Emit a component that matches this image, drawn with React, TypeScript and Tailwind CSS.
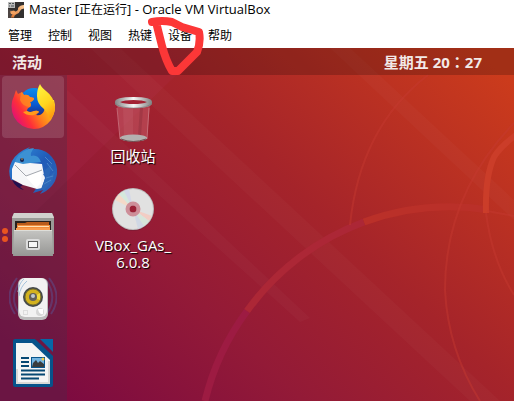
import type { ReactNode } from "react";

const menus = ["管理", "控制", "视图", "热键", "设备", "帮助"];

function VmIcon() {
  return (
    <svg viewBox="0 0 16 16" className="size-4 shrink-0" aria-hidden="true">
      <defs>
        <linearGradient id="vm" x1="0" y1="1" x2="1" y2="0">
          <stop offset="0" stopColor="#d9702c" />
          <stop offset="1" stopColor="#ffcf9a" />
        </linearGradient>
      </defs>
      <rect width="16" height="16" fill="#33302f" />
      <path d="M0 7 5 8.500 4 16H0z" fill="#4d4542" />
      <path d="M3 15.500Q4 11 7.500 9.500Q10.500 8.500 10 6Q12 3 16 3V6.500Q13 6.500 12 9Q11 12 8 12.500Q6 13.500 6 15.500z" fill="url(#vm)" />
      <path d="M2 9.500 6 8.500 9 11 6.500 12.500 3 12z" fill="#f2a262" />
      <path d="M0 0H7V6H0z" fill="#b9b9b9" />
      <path d="M1 1.500H3M4 1.500H6M1 4H2M3 4H6" stroke="#4c5558" />
    </svg>
  );
}

function Firefox() {
  return (
    <svg viewBox="0 0 48 48" className="size-12" aria-hidden="true">
      <defs>
        <linearGradient id="fx" x1=".95" y1=".2" x2=".05" y2=".7">
          <stop offset="0" stopColor="#ffe52b" />
          <stop offset=".25" stopColor="#ffb018" />
          <stop offset=".5" stopColor="#ff7a1d" />
          <stop offset=".75" stopColor="#ff3038" />
          <stop offset="1" stopColor="#e31172" />
        </linearGradient>
        <linearGradient id="fy" x1=".3" y1="0" x2=".7" y2="1">
          <stop offset="0" stopColor="#fff23c" />
          <stop offset=".55" stopColor="#ffd51f" />
          <stop offset="1" stopColor="#ff980e" />
        </linearGradient>
        <linearGradient id="fb" x1=".5" y1="0" x2=".5" y2="1">
          <stop offset="0" stopColor="#0a8cec" />
          <stop offset=".55" stopColor="#0b5bd2" />
          <stop offset="1" stopColor="#23206f" />
        </linearGradient>
      </defs>
      <circle cx="25" cy="20" r="15" fill="url(#fb)" />
      <path d="M7 7 9 11 13 9 15 12Q19 11 21 14L25 15Q25 18 21 19Q23 22 21 24Q18 25 18 28Q21 30 25 28Q29 27 30 29L27 32Q33 33 35 28Q37 23 35 17L45 17Q48 27 42 37Q35 46 25 46Q11 45 5 34Q0 23 5 13Z" fill="url(#fx)" />
      <path d="M31 1Q32 4 37 8Q45 14 46 24Q46 32 41 36Q39 30 35 26Q28 21 28 13Q28 6 31 1z" fill="url(#fy)" />
      <path d="M12 10 13 9 15 12Q19 11 21 14L25 15Q25 18 21 19Q23 22 21 24Q14 24 11 17z" fill="#ff8420" opacity=".8" />
      <path d="M18 28Q21 30 25 28Q29 27 30 29L25 32Q18 33 14 29z" fill="#ff9a1c" />
    </svg>
  );
}

function Thunderbird() {
  return (
    <svg viewBox="0 0 48 48" className="size-12" aria-hidden="true">
      <defs>
        <linearGradient id="tb" x1="0" y1="0" x2="1" y2="1">
          <stop offset="0" stopColor="#3193de" />
          <stop offset=".5" stopColor="#205bb8" />
          <stop offset="1" stopColor="#2f63b5" />
        </linearGradient>
      </defs>
      <path d="M2 33Q-2 23 3 14Q8 5 21 0L18 3Q31 0 40 7Q49 15 48 27Q46 41 31 47L34 43 24 46 30 37z" fill="url(#tb)" />
      <path d="M3 33 14 38 11 40 15 43Q7 41 3 33z" fill="#20104f" />
      <path d="M7 12Q13 2 25 1Q21 6 22 9Q29 7 32 15L22 16 13 18 6 15z" fill="#3c91d3" />
      <path d="M6 15 14 17 21 16 33 17 35 28 36 31 33 41 28 42 14 38 3 32V22z" fill="#f5f6f8" />
      <path d="m6 18 11 11 16-6-1 13-5 5" fill="#fff" />
      <path d="m6 18 11 11 16-6" fill="none" stroke="#a3a7ae" />
      <path d="M34 18 36 25 34 28 37 29 32 42 35 43 43 35 46 24 40 30 43 17 36 23z" fill="#2c68b8" />
      <path d="M36 10 43 17M38 16 44 24M37 31 44 29M35 37 42 33" stroke="#4984c9" strokeWidth="1" />
      <circle cx="13" cy="13" r="2" fill="#182654" />
      <circle cx="13" cy="12" r="1" fill="#80745c" />
    </svg>
  );
}

function Files() {
  return (
    <svg viewBox="0 0 48 48" className="size-12" aria-hidden="true">
      <defs>
        <linearGradient id="dr" x1="0" y1="0" x2="0" y2="1">
          <stop offset="0" stopColor="#c5c5c2" />
          <stop offset="1" stopColor="#969694" />
        </linearGradient>
      </defs>
      <path d="M5 2H43L45 6V43H3V6z" fill="#9a9a97" />
      <path d="M5 2H43L45 7H3z" fill="#d1d1ce" />
      <path d="M6 10H42V20H6z" fill="#28211e" />
      <path d="M8 12H16L18 11H40V19H8z" fill="#b95b1b" />
      <path d="M8 14H41V20H8z" fill="#f18d3c" />
      <path d="M9 15.500H40" stroke="#ffe0b3" />
      <path d="M7 18H41" stroke="#fa9d50" strokeWidth="2" />
      <path d="M5 19H43L44 45H4z" fill="url(#dr)" />
      <path d="M5 19.500H43" stroke="#deded9" />
      <rect x="17" y="28" width="14" height="11" rx="2" fill="#ddd" />
      <rect x="19.500" y="30.500" width="9" height="6" fill="#f7f7f7" stroke="#5e5e5e" />
    </svg>
  );
}

function Speaker() {
  return (
    <svg viewBox="0 0 48 48" className="size-12" aria-hidden="true">
      <g fill="none" stroke="#59599b" strokeWidth="2" opacity=".45">
        <path d="M8 3Q-6 21 6 39M12 5Q-1 22 10 38M40 3Q54 21 42 39M37 5Q49 22 38 38" />
      </g>
      <rect x="9" y="3" width="30" height="42" rx="6" fill="#bdbdbd" />
      <rect x="10" y="3" width="28" height="39" rx="6" fill="#f2f2f2" />
      <path d="M9 17Q10 8 15 4M10 21Q11 12 18 6" fill="none" stroke="#a6c4dc" />
      <circle cx="24" cy="22" r="10" fill="#44494a" />
      <circle cx="24" cy="22" r="8" fill="#d3b21e" stroke="#77702c" />
      <path d="m24 22 7-4v7z" fill="#f0d93a" />
      <circle cx="24" cy="22" r="4" fill="#62605a" />
      <circle cx="24" cy="21" r="2" fill="#c0c9d0" />
      <circle cx="31" cy="37" r="4" fill="#d7d7d7" />
      <path d="M29 34h5v5q-4 1-5-5" fill="#fff" />
      <rect x="14.500" y="35.500" width="4" height="4" fill="none" stroke="#ddd" />
    </svg>
  );
}

function Writer() {
  return (
    <svg viewBox="0 0 48 48" className="size-12" aria-hidden="true">
      <path d="M6 0H26L44 17V46Q44 48 42 48H6Q4 48 4 46V2Q4 0 6 0z" fill="#07538b" />
      <path d="M7 4H23L41 21V45H7z" fill="#f5f5f5" />
      <path d="M8 30V44H40V22" fill="none" stroke="#d9d9d7" strokeWidth="2" />
      <path d="M31 0H44V13z" fill="#0668a6" />
      <path d="M12 19H20M12 23H20M12 27H20M12 31.500H36M12 35.500H36M12 39.500H30" stroke="#064873" strokeWidth="2" />
      <rect x="22" y="18" width="14" height="11" fill="#0a568b" />
      <path d="M23 19H35V28H23z" fill="#74b4df" />
      <path d="m23 28 1-4 3-3 2 3 2-2 4 3v3z" fill="#3a3d3d" />
      <circle cx="34" cy="20" r="1.500" fill="#f5cb45" />
    </svg>
  );
}

function Trash() {
  return (
    <svg viewBox="0 0 48 48" className="size-12" aria-hidden="true">
      <defs>
        <linearGradient id="rim" x1="0" x2="1">
          <stop offset="0" stopColor="#858585" />
          <stop offset=".5" stopColor="#f5f5f5" />
          <stop offset="1" stopColor="#828282" />
        </linearGradient>
      </defs>
      <path d="M8 8H41L38 43Q24 48 11 43z" fill="#c9606c" opacity=".5" />
      <path d="M14 12H24V40H15z" fill="#e2919a" opacity=".12" />
      <path d="M31 12H34L32 40H29z" fill="#702030" opacity=".25" />
      <path d="M8 12 11 43M40 12 38 43" stroke="#d28791" opacity=".65" />
      <ellipse cx="24.500" cy="42" rx="13.500" ry="3.500" fill="#b4b1b0" />
      <path d="M12 43Q24 48 37 43" fill="none" stroke="#6f4d50" />
      <path fillRule="evenodd" d="M6 6Q6 1 24.500 1T43 6V8Q41 12 24.500 12T6 8zM11 6Q15 8 24.500 8T38 6Q34 4 24.500 4T11 6z" fill="url(#rim)" />
      <path d="M6 7Q10 12 24.500 12T43 7" fill="none" stroke="#777" opacity=".6" />
    </svg>
  );
}

function Disc() {
  return (
    <svg viewBox="0 0 48 48" className="size-12" aria-hidden="true">
      <circle cx="24" cy="25" r="21" fill="#701c34" opacity=".5" />
      <circle cx="24" cy="24" r="21" fill="#bcbcbc" />
      <circle cx="24" cy="24" r="20" fill="#e1e1e1" />
      <path d="M24 24 6 15 10 9z" fill="#f4d9c9" />
      <path d="M24 24 10 9 15 6z" fill="#d5e8dd" />
      <path d="M24 24 15 6 20 4z" fill="#d4d8e8" />
      <path d="M24 24 43 31 40 36z" fill="#f2cdc4" />
      <path d="M24 24 40 36 35 41z" fill="#d6e5da" />
      <path d="M24 24 35 41 29 44z" fill="#d0d8e4" />
      <circle cx="24" cy="24" r="5.500" fill="none" stroke="#ce8e99" strokeWidth="4" />
      <circle cx="24" cy="24" r="3.500" fill="#9c2036" />
    </svg>
  );
}

function Wallpaper() {
  return (
    <svg viewBox="0 48 514 353" preserveAspectRatio="xMinYMin slice" className="absolute inset-0 size-full" aria-hidden="true">
      <defs>
        <linearGradient id="wall" gradientUnits="userSpaceOnUse" x1="90" y1="420" x2="455" y2="30">
          <stop offset="0" stopColor="#7d0b40" />
          <stop offset=".3" stopColor="#931a37" />
          <stop offset=".58" stopColor="#a5242a" />
          <stop offset="1" stopColor="#cb3b1c" />
        </linearGradient>
      </defs>
      <path d="M0 48H514V401H0z" fill="url(#wall)" />
      <path d="M0 48H204L67 181 0 246z" fill="#b8305a" opacity=".14" />
      <g fill="#fff" opacity=".02">
        <path d="M67 90 310 318 300 322 67 112z" />
        <path d="M120 48 500 401H470L90 48z" />
        <path d="M330 48 514 220V200L350 48z" />
      </g>
      <g fill="none" strokeWidth="7">
        <path d="M205 401A250 250 0 0 1 247 311" stroke="#9d1b42" />
        <path d="M247 311A250 250 0 0 1 364 222" stroke="#ac2736" />
        <path d="M364 222A250 250 0 0 1 489 210" stroke="#ba3029" />
        <path d="M486 213Q485 177 494 157Q500 147 516 135" stroke="#cb3d29" strokeWidth="6" />
      </g>
      <g fill="none" stroke="#c63a30" strokeWidth="2" opacity=".45">
        <path d="M350 225Q360 127 428 75M514 123Q445 195 445 290Q448 350 480 401M486 213Q492 260 514 295M487 211 514 216" />
      </g>
    </svg>
  );
}

function DockButton({ label, active, running, children }: { label: string; active?: boolean; running?: boolean; children: ReactNode }) {
  return (
    <li className="relative pl-[2px]">
      <button type="button" aria-label={label} className={`flex size-[62px] items-center justify-center rounded-sm ${active ? "bg-white/13" : ""}`}>
        {children}
      </button>
      {running && (
        <span className="absolute top-6 left-[2px] flex flex-col gap-[2px]">
          <i className="size-[6px] rounded-full bg-[#e95420]" />
          <i className="size-[6px] rounded-full bg-[#e95420]" />
        </span>
      )}
    </li>
  );
}

function DesktopButton({ label, children }: { label: string; children: ReactNode }) {
  return (
    <button type="button" className="flex w-20 flex-col items-center font-['Open_Sans','Noto_Sans_CJK_SC',sans-serif] text-[15px] leading-[17px] text-white [text-shadow:1px_1px_1px_#000]">
      {children}
      <span className="pt-1 whitespace-pre-line">{label}</span>
    </button>
  );
}

export default function App() {
  return (
    <div className="relative flex min-h-screen flex-col overflow-hidden bg-white font-['Open_Sans','Noto_Sans_CJK_SC',sans-serif] text-black">
      <header className="flex h-[19px] items-center gap-[5px] pl-2 text-[13px] leading-4 whitespace-nowrap">
        <VmIcon />
        <h1>Master [<span className="text-xs">正在运行</span>] - Oracle VM VirtualBox</h1>
      </header>
      <nav className="flex h-[29px] items-center gap-4 pt-[5px] pl-2 text-xs leading-4 whitespace-nowrap">
        {menus.map((name) => (
          <button key={name} type="button">{name}</button>
        ))}
      </nav>
      <main className="relative flex flex-1 flex-col">
        <Wallpaper />
        <div className="relative flex h-[27px] items-center justify-between bg-black/20 pr-8 pl-3 text-[15px] leading-5 font-bold text-[#f2e9e7] [text-shadow:0_0_2px_#0006]">
          <button type="button">活动</button>
          <button type="button" className="font-['Open_Sans','Noto_Sans_CJK_TC',sans-serif]">星期五 20：27</button>
        </div>
        <div className="relative flex flex-1">
          <ul className="flex w-[67px] shrink-0 flex-col gap-[2px] bg-[#42304b]/30 pt-px pb-[7px]">
            <DockButton label="Firefox" active><Firefox /></DockButton>
            <DockButton label="Thunderbird"><Thunderbird /></DockButton>
            <DockButton label="文件" running><Files /></DockButton>
            <DockButton label="Rhythmbox"><Speaker /></DockButton>
            <DockButton label="LibreOffice Writer"><Writer /></DockButton>
          </ul>
          <div className="flex flex-col items-center gap-5 pt-[21px] pl-[26px]">
            <DesktopButton label="回收站"><Trash /></DesktopButton>
            <DesktopButton label={"VBox_GAs_\n6.0.8"}><Disc /></DesktopButton>
          </div>
        </div>
      </main>
      <svg viewBox="0 0 60 64" className="pointer-events-none absolute top-4 left-[146px] h-16 w-[60px]" aria-hidden="true">
        <path d="M6 6Q16 4 26 6L36 11 53 16Q55 26 51 36L39 48 32 55H26Q20 45 16 30L11 10" fill="none" stroke="#fc3737" strokeWidth="8" strokeLinecap="round" strokeLinejoin="round" />
      </svg>
    </div>
  );
}
